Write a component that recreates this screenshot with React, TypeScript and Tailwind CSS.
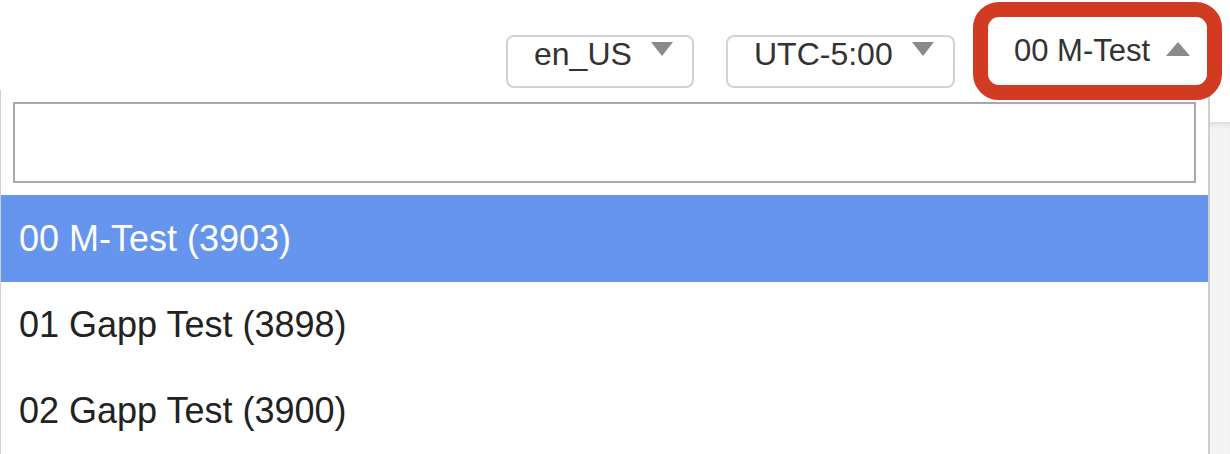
import React from "react";

function Caret({ up = false, w = 22, h = 13 }: { up?: boolean; w?: number; h?: number }) {
  return (
    <svg width={w} height={h} viewBox={`0 0 ${w} ${h}`} className="block">
      {up ? (
        <polygon points={`0,${h} ${w},${h} ${w / 2},0`} fill="#8a8a8a" />
      ) : (
        <polygon points={`0,0 ${w},0 ${w / 2},${h}`} fill="#8a8a8a" />
      )}
    </svg>
  );
}

const items = ["00 M-Test (3903)", "01 Gapp Test (3898)", "02 Gapp Test (3900)"];

export default function App() {
  return (
    <div
      className="relative w-[1230px] h-[454px] overflow-hidden bg-white"
      style={{ fontFamily: '"Liberation Sans", Arial, sans-serif' }}
    >
      {/* header */}
      <div className="relative z-20 h-[122px] flex justify-end items-start pt-[2px] pr-[8px]">
        <div className="mt-[33px] w-[188px] h-[53px] border-2 border-[#d2d2d2] rounded-[8px] bg-white flex items-start pt-[1px] pl-[26px] pr-[19px]">
          <span className="text-[32px] leading-[32px] text-[#333]">en_US</span>
          <span className="ml-auto mt-[4px]">
            <Caret w={22} h={14} />
          </span>
        </div>
        <div className="ml-[32px] mt-[33px] w-[229px] h-[53px] border-2 border-[#d2d2d2] rounded-[8px] bg-white flex items-start pt-[1px] pl-[26px] pr-[19px]">
          <span className="text-[32px] leading-[32px] text-[#333]">UTC-5:00</span>
          <span className="ml-auto mt-[4px]">
            <Caret w={22} h={14} />
          </span>
        </div>
        <div className="ml-[18px] w-[249px] h-[98px] border-[15px] border-[#d13b21] rounded-[26px] bg-white flex items-start pt-[18px] pl-[26px] pr-[17px]">
          <span className="text-[31px] leading-[31px] text-[#333]">00 M-Test</span>
          <span className="ml-auto mt-[7px]">
            <Caret up w={24} h={14} />
          </span>
        </div>
      </div>

      {/* page content behind */}
      <div className="h-[332px] bg-[#f4f4f4] shadow-[inset_0_6px_6px_-4px_rgba(0,0,0,0.12)]" />

      {/* dropdown panel */}
      <div className="absolute z-10 left-0 top-[90px] bottom-0 w-[1210px] bg-white border-l border-r-2 border-[#cfcfcf]">
        <div className="px-[12px] pt-[12px]">
          <div className="h-[81px] border-2 border-[#a9a9a9] bg-white" />
        </div>
        <div className="mt-[12px] flex flex-col">
          {items.map((t, i) => (
            <div
              key={t}
              className={
                i === 0
                  ? "h-[87px] flex items-center pl-[18px] bg-[#6695ee] text-white text-[36px]"
                  : "h-[86px] flex items-center pl-[18px] text-[#222] text-[36px]"
              }
            >
              {t}
            </div>
          ))}
        </div>
      </div>
    </div>
  );
}
